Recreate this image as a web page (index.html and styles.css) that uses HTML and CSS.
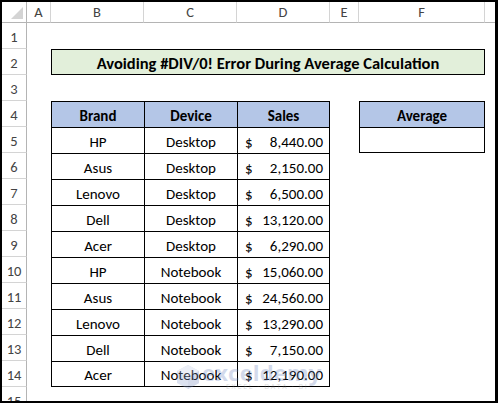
FILE: index.html
```html
<!DOCTYPE html>
<html>
<head>
<meta charset="utf-8">
<link rel="stylesheet" href="styles.css">
</head>
<body>
<div class="frame">
  <div class="row hdr">
    <div class="c rh corner"><svg width="12" height="12" viewBox="0 0 12 12"><polygon points="12,0 12,12 0,12" fill="#d4d4d4"/></svg></div>
    <div class="c ch w-a">A</div>
    <div class="c ch w-b">B</div>
    <div class="c ch w-c">C</div>
    <div class="c ch w-d">D</div>
    <div class="c ch w-e">E</div>
    <div class="c ch w-f">F</div>
    <div class="c ch w-g"></div>
  </div>
  <div class="row"><div class="c rh">1</div></div>
  <div class="row">
    <div class="c rh">2</div>
    <div class="c w-a"></div>
    <div class="c title">Avoiding #DIV/0! Error During Average Calculation</div>
  </div>
  <div class="row"><div class="c rh">3</div></div>
  <div class="row">
    <div class="c rh">4</div>
    <div class="c w-a"></div>
    <div class="c w-b t th">Brand</div>
    <div class="c w-c t th">Device</div>
    <div class="c w-d t th end">Sales</div>
    <div class="c w-e"></div>
    <div class="c w-f t th end">Average</div>
  </div>
  <div class="row">
    <div class="c rh">5</div>
    <div class="c w-a"></div>
    <div class="c w-b t">HP</div>
    <div class="c w-c t">Desktop</div>
    <div class="c w-d t end money"><span>$</span><span>8,440.00</span></div>
    <div class="c w-e"></div>
    <div class="c w-f t end bottom"></div>
  </div>
  <div class="row">
    <div class="c rh">6</div>
    <div class="c w-a"></div>
    <div class="c w-b t">Asus</div>
    <div class="c w-c t">Desktop</div>
    <div class="c w-d t end money"><span>$</span><span>2,150.00</span></div>
  </div>
  <div class="row">
    <div class="c rh">7</div>
    <div class="c w-a"></div>
    <div class="c w-b t">Lenovo</div>
    <div class="c w-c t">Desktop</div>
    <div class="c w-d t end money"><span>$</span><span>6,500.00</span></div>
  </div>
  <div class="row">
    <div class="c rh">8</div>
    <div class="c w-a"></div>
    <div class="c w-b t">Dell</div>
    <div class="c w-c t">Desktop</div>
    <div class="c w-d t end money"><span>$</span><span>13,120.00</span></div>
  </div>
  <div class="row">
    <div class="c rh">9</div>
    <div class="c w-a"></div>
    <div class="c w-b t">Acer</div>
    <div class="c w-c t">Desktop</div>
    <div class="c w-d t end money"><span>$</span><span>6,290.00</span></div>
  </div>
  <div class="row">
    <div class="c rh">10</div>
    <div class="c w-a"></div>
    <div class="c w-b t">HP</div>
    <div class="c w-c t">Notebook</div>
    <div class="c w-d t end money"><span>$</span><span>15,060.00</span></div>
  </div>
  <div class="row">
    <div class="c rh">11</div>
    <div class="c w-a"></div>
    <div class="c w-b t">Asus</div>
    <div class="c w-c t">Notebook</div>
    <div class="c w-d t end money"><span>$</span><span>24,560.00</span></div>
  </div>
  <div class="row">
    <div class="c rh">12</div>
    <div class="c w-a"></div>
    <div class="c w-b t">Lenovo</div>
    <div class="c w-c t">Notebook</div>
    <div class="c w-d t end money"><span>$</span><span>13,290.00</span></div>
  </div>
  <div class="row">
    <div class="c rh">13</div>
    <div class="c w-a"></div>
    <div class="c w-b t">Dell</div>
    <div class="c w-c t">Notebook</div>
    <div class="c w-d t end money"><span>$</span><span>7,150.00</span></div>
  </div>
  <div class="row">
    <div class="c rh">14</div>
    <div class="c w-a"></div>
    <div class="c w-b t bottom">Acer</div>
    <div class="c w-c t bottom">Notebook</div>
    <div class="c w-d t end bottom money"><span>$</span><span>12,190.00</span></div>
  </div>
  <div class="row"><div class="c rh">15</div></div>

  <div class="watermark">
    <svg class="wm-icon" width="22" height="24" viewBox="0 0 22 24">
      <polygon points="11,0 22,6 22,18 11,24 0,18 0,6" fill="#8fa3cf"/>
      <polygon points="11,0 22,6 11,12 0,6" fill="#c3cde6"/>
      <polygon points="11,12 22,6 22,18 11,24" fill="#7288bd"/>
    </svg>
    <div class="wm-text">
      <div class="wm-big">exceldemy</div>
      <div class="wm-small">EXCEL · DATA · BI</div>
    </div>
  </div>
</div>
</body>
</html>
```

FILE: styles.css
```css
html, body {
  margin: 0;
  padding: 0;
  background: #fff;
}

.frame {
  width: 498px;
  height: 403px;
  box-sizing: border-box;
  border: 2px solid #000;
  border-right-width: 3px;
  overflow: hidden;
  position: relative;
  background: #fff;
  font-family: Carlito, Lato, "Liberation Sans", sans-serif;
  color: #000;
}

.row {
  display: flex;
  height: 26px;
}

.row.hdr {
  height: 21px;
}

.c {
  flex: none;
  box-sizing: border-box;
  height: 100%;
  display: flex;
  align-items: center;
  justify-content: center;
  font-size: 15px;
  white-space: nowrap;
  padding-top: 2px;
}

.rh {
  width: 25px;
  border-right: 1px solid #b4b4b4;
  border-bottom: 1px solid #d4d4d4;
  color: #444;
  font-size: 14.5px;
}

.corner {
  border-bottom: 1px solid #b4b4b4;
  align-items: flex-end;
  justify-content: flex-end;
  padding: 0 3px 3px 0;
}

.ch {
  color: #444;
  font-size: 14.5px;
  border-right: 1px solid #d4d4d4;
  border-bottom: 1px solid #b4b4b4;
  padding-top: 0;
}

.w-a { width: 24px; }
.w-b { width: 93px; }
.w-c { width: 93px; }
.w-d { width: 93px; }
.w-e { width: 29px; }
.w-f { width: 126px; }
.w-g { width: 10px; border-right: none; }

.title {
  width: 434px;
  border: 1px solid #000;
  background: #e2efda;
  font-weight: bold;
  font-size: 16.5px;
  padding-top: 1px;
}

.t {
  border-left: 1px solid #000;
  border-top: 1px solid #000;
}

.t.end {
  border-right: 1px solid #000;
}

.t.bottom {
  border-bottom: 1px solid #000;
}

.th {
  background: #b4c6e7;
  font-weight: bold;
}

.money {
  justify-content: space-between;
  padding-left: 7px;
  padding-right: 6px;
}

.watermark {
  position: absolute;
  left: 175px;
  top: 360px;
  display: flex;
  align-items: center;
  gap: 3px;
  opacity: 0.3;
  pointer-events: none;
}

.wm-text {
  display: flex;
  flex-direction: column;
  align-items: flex-start;
}

.wm-big {
  font-family: "Open Sans", sans-serif;
  font-weight: bold;
  font-size: 22px;
  line-height: 20px;
  color: #6f86c0;
  letter-spacing: 0.2px;
}

.wm-small {
  font-family: "Open Sans", sans-serif;
  font-size: 7px;
  line-height: 9px;
  color: #8c8c8c;
  letter-spacing: 1.6px;
  margin-left: 24px;
}
```
